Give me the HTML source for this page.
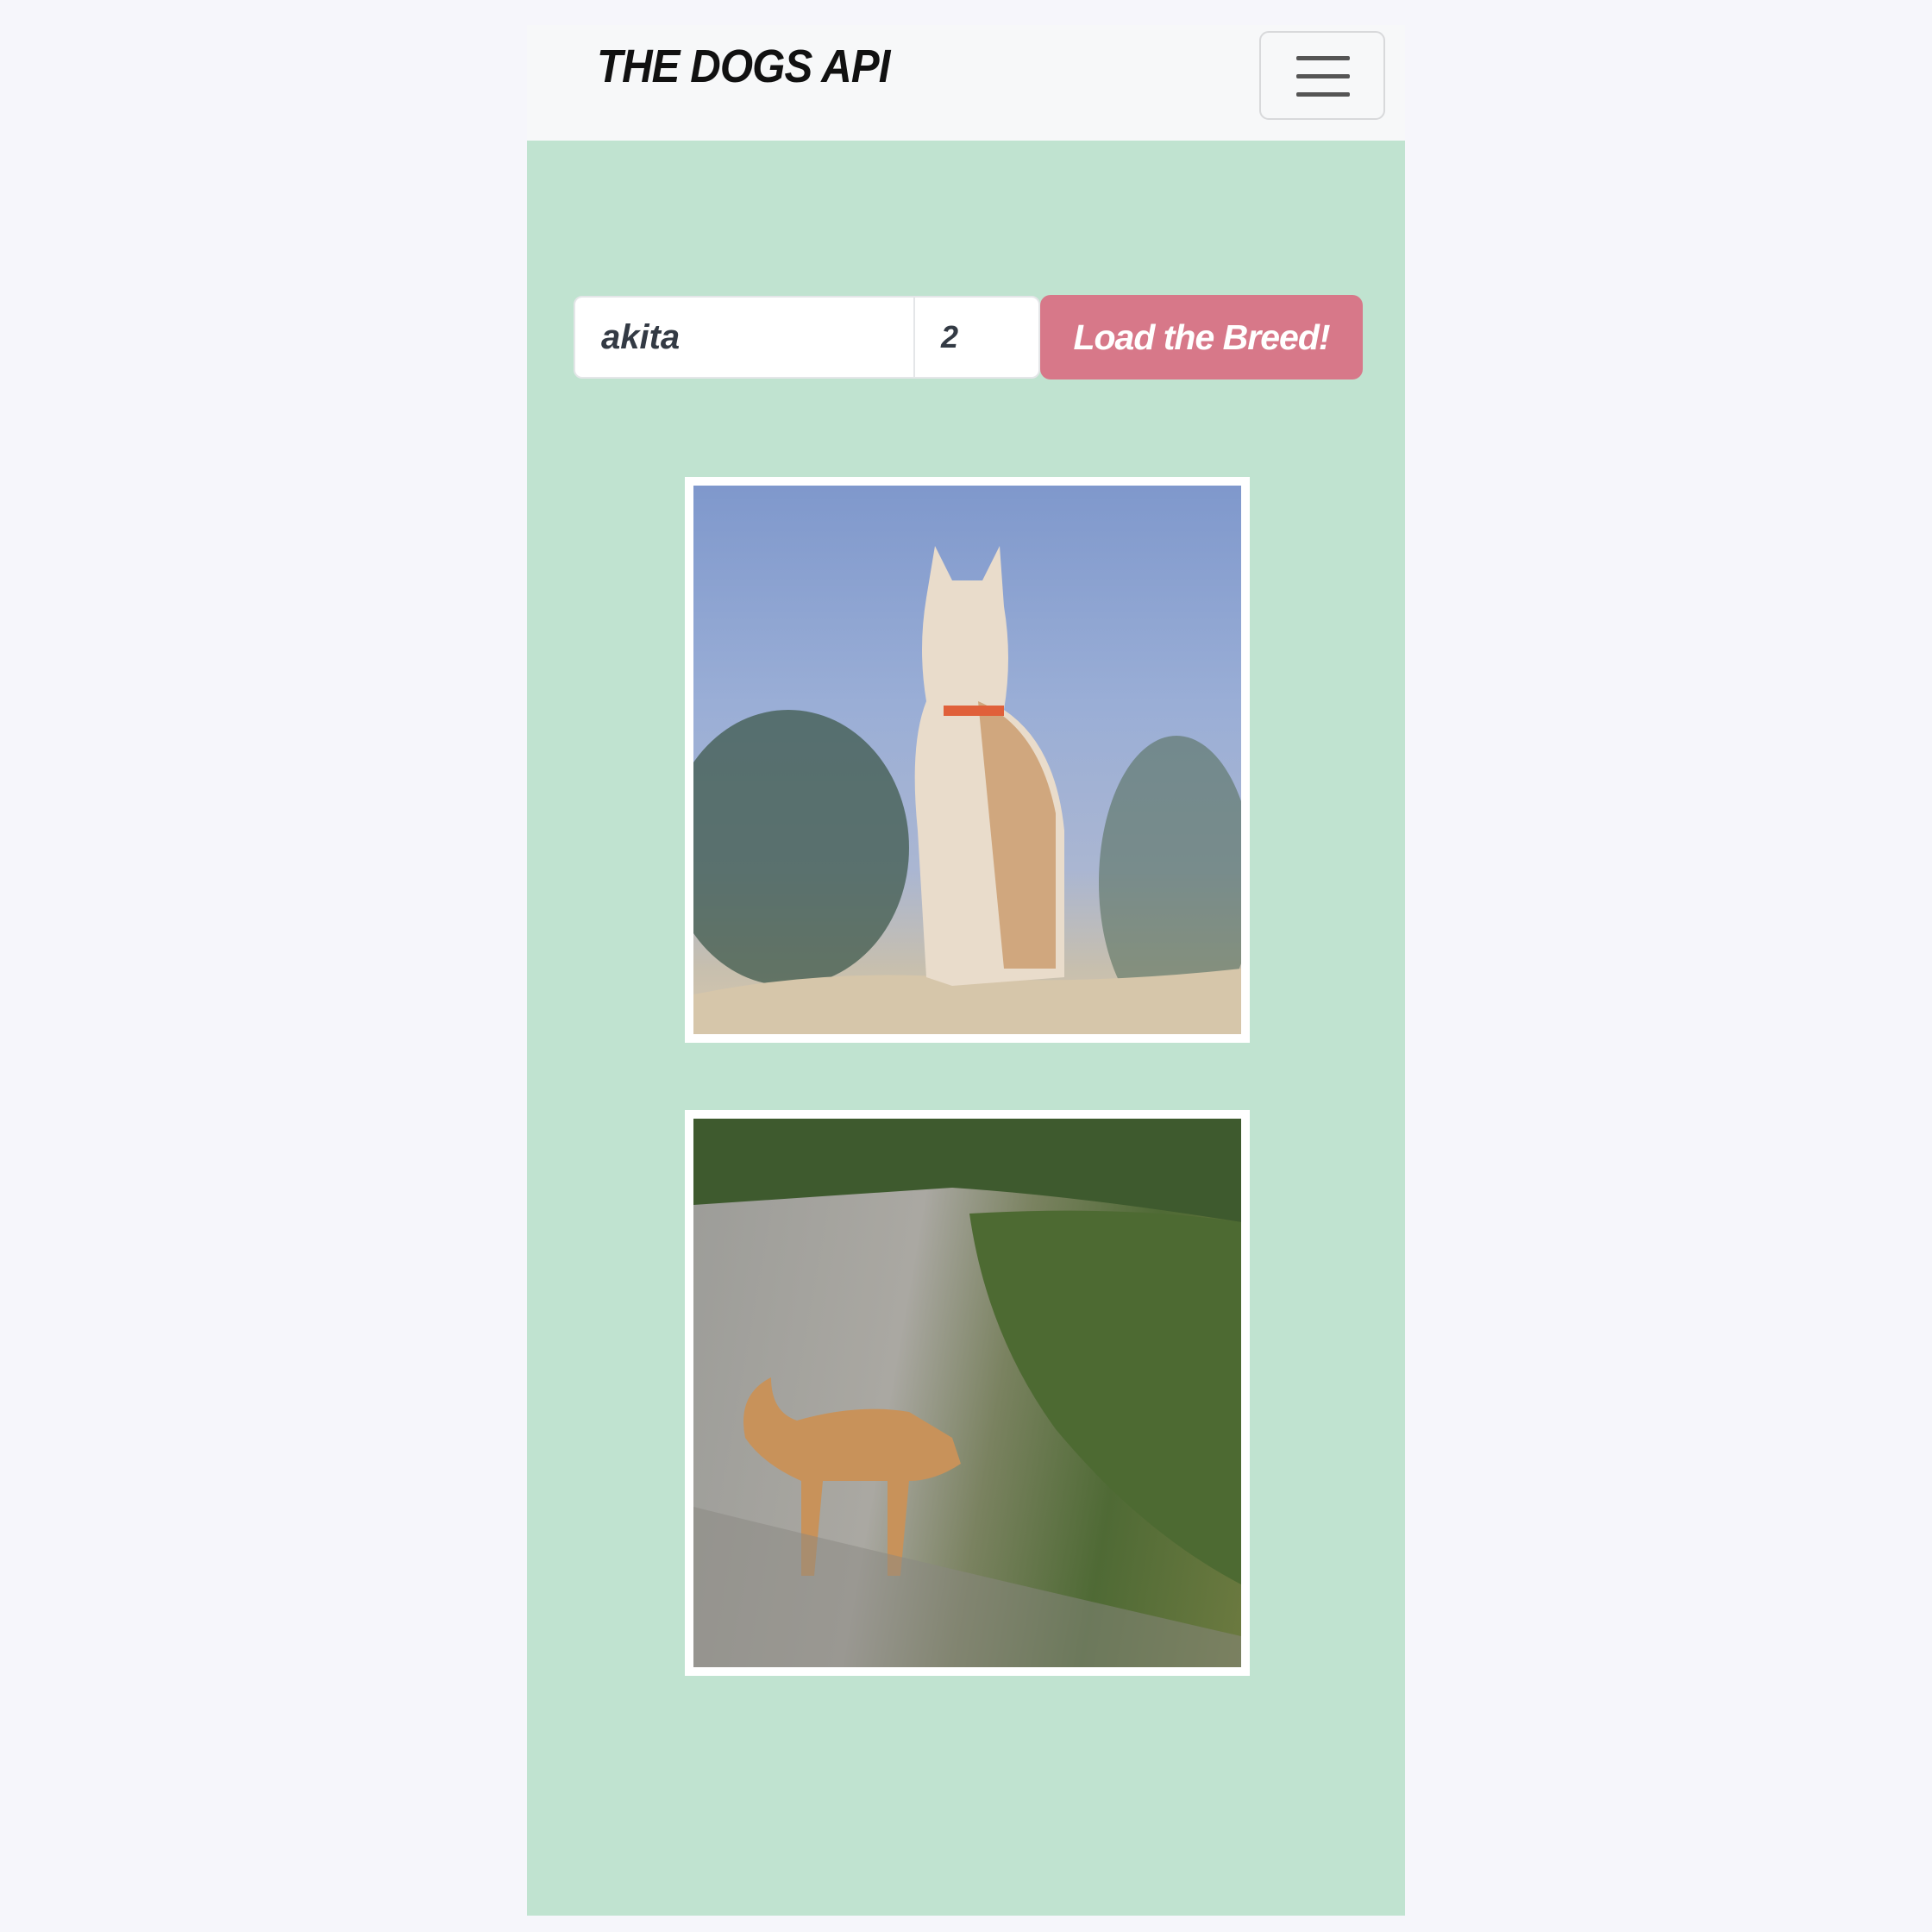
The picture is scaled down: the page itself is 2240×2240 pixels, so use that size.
<!DOCTYPE html>
<html><head><style>
*{margin:0;padding:0;box-sizing:border-box}
body{width:2240px;height:2240px;background:#f6f6fb;position:relative;overflow:hidden;font-family:"Liberation Sans",sans-serif}
.hdr{position:absolute;left:611px;top:29px;width:1018px;height:134px;background:#f7f8f9}
.title{position:absolute;left:692px;top:46px;font-size:54px;font-weight:bold;font-style:italic;color:#111;transform:scaleX(.91);transform-origin:left;letter-spacing:-1px}
.ham{position:absolute;left:1460px;top:36px;width:146px;height:103px;border:2px solid #d8d9db;border-radius:11px}
.ham i{position:absolute;left:41px;width:62px;height:5px;background:#555;border-radius:2px}
.main{position:absolute;left:611px;top:163px;width:1018px;height:2058px;background:#c0e3d0}
.in{position:absolute;top:343px;height:96px;background:#fff;border:2px solid #e4e6e8;font-style:italic;font-weight:bold;color:#333a44;font-size:40px;line-height:92px}
.btn{position:absolute;left:1206px;top:342px;width:374px;height:98px;background:#d77889;border-radius:12px;color:#fff;font-weight:bold;font-style:italic;font-size:41px;line-height:98px;text-align:center;letter-spacing:-1px}
.fr{position:absolute;left:794px;width:655px;height:656px;background:#fff;padding:10px}
.fr div{width:100%;height:100%;position:relative;overflow:hidden}
</style></head><body>
<div class="hdr"></div>
<div class="title">THE DOGS API</div>
<div class="ham"><i style="top:27px"></i><i style="top:48px"></i><i style="top:69px"></i></div>
<div class="main"></div>
<div class="in" style="left:665px;width:396px;border-radius:10px 0 0 10px;padding-left:30px">akita</div>
<div class="in" style="left:1059px;width:147px;border-radius:0 10px 10px 0;padding-left:30px;font-size:36px">2</div>
<div class="btn">Load the Breed!</div>
<div class="fr" style="top:553px"><div style="background:linear-gradient(#7f98cc 0%,#9aaed6 40%,#aab6d2 70%,#c7bfae 88%,#d8c8ae 100%)">
<svg width="635" height="636" style="position:absolute;left:0;top:0">
<ellipse cx="110" cy="420" rx="140" ry="160" fill="#3f5a4c" opacity=".75"/>
<ellipse cx="560" cy="460" rx="90" ry="170" fill="#56705e" opacity=".6"/>
<path d="M0 590 Q150 560 300 570 T635 560 L635 636 L0 636Z" fill="#d6c6aa"/>
<path d="M270 130 L280 70 L300 110 L335 110 L355 70 L360 140 Q370 200 360 260 Q420 300 430 400 L430 570 L300 580 L270 570 L260 400 Q250 300 270 250 Q260 190 270 130Z" fill="#e9dccb"/>
<path d="M330 250 Q400 280 420 380 L420 560 L360 560Z" fill="#c99a6a" opacity=".8"/>
<rect x="290" y="255" width="70" height="12" fill="#e0603a"/>
</svg></div></div>
<div class="fr" style="top:1287px"><div style="background:linear-gradient(100deg,#9c9c98 0%,#aaa8a2 38%,#7a8260 55%,#4f6a35 75%,#6c7a40 100%)">
<svg width="635" height="636" style="position:absolute;left:0;top:0">
<path d="M0 0 L635 0 L635 120 Q450 90 300 80 Q150 90 0 100Z" fill="#3e5a2e"/>
<path d="M320 110 Q500 100 635 120 L635 540 Q520 480 420 360 Q340 250 320 110Z" fill="#4d6a32"/>
<path d="M60 370 Q50 320 90 300 Q90 340 120 350 Q190 330 250 340 L300 370 L310 400 Q280 420 250 420 L240 530 L225 530 L225 420 L150 420 L140 530 L125 530 L125 420 Q80 400 60 370Z" fill="#c8925a"/>
<path d="M0 450 Q200 500 635 600 L635 636 L0 636Z" fill="#8a8882" opacity=".5"/>
</svg></div></div>
</body></html>
